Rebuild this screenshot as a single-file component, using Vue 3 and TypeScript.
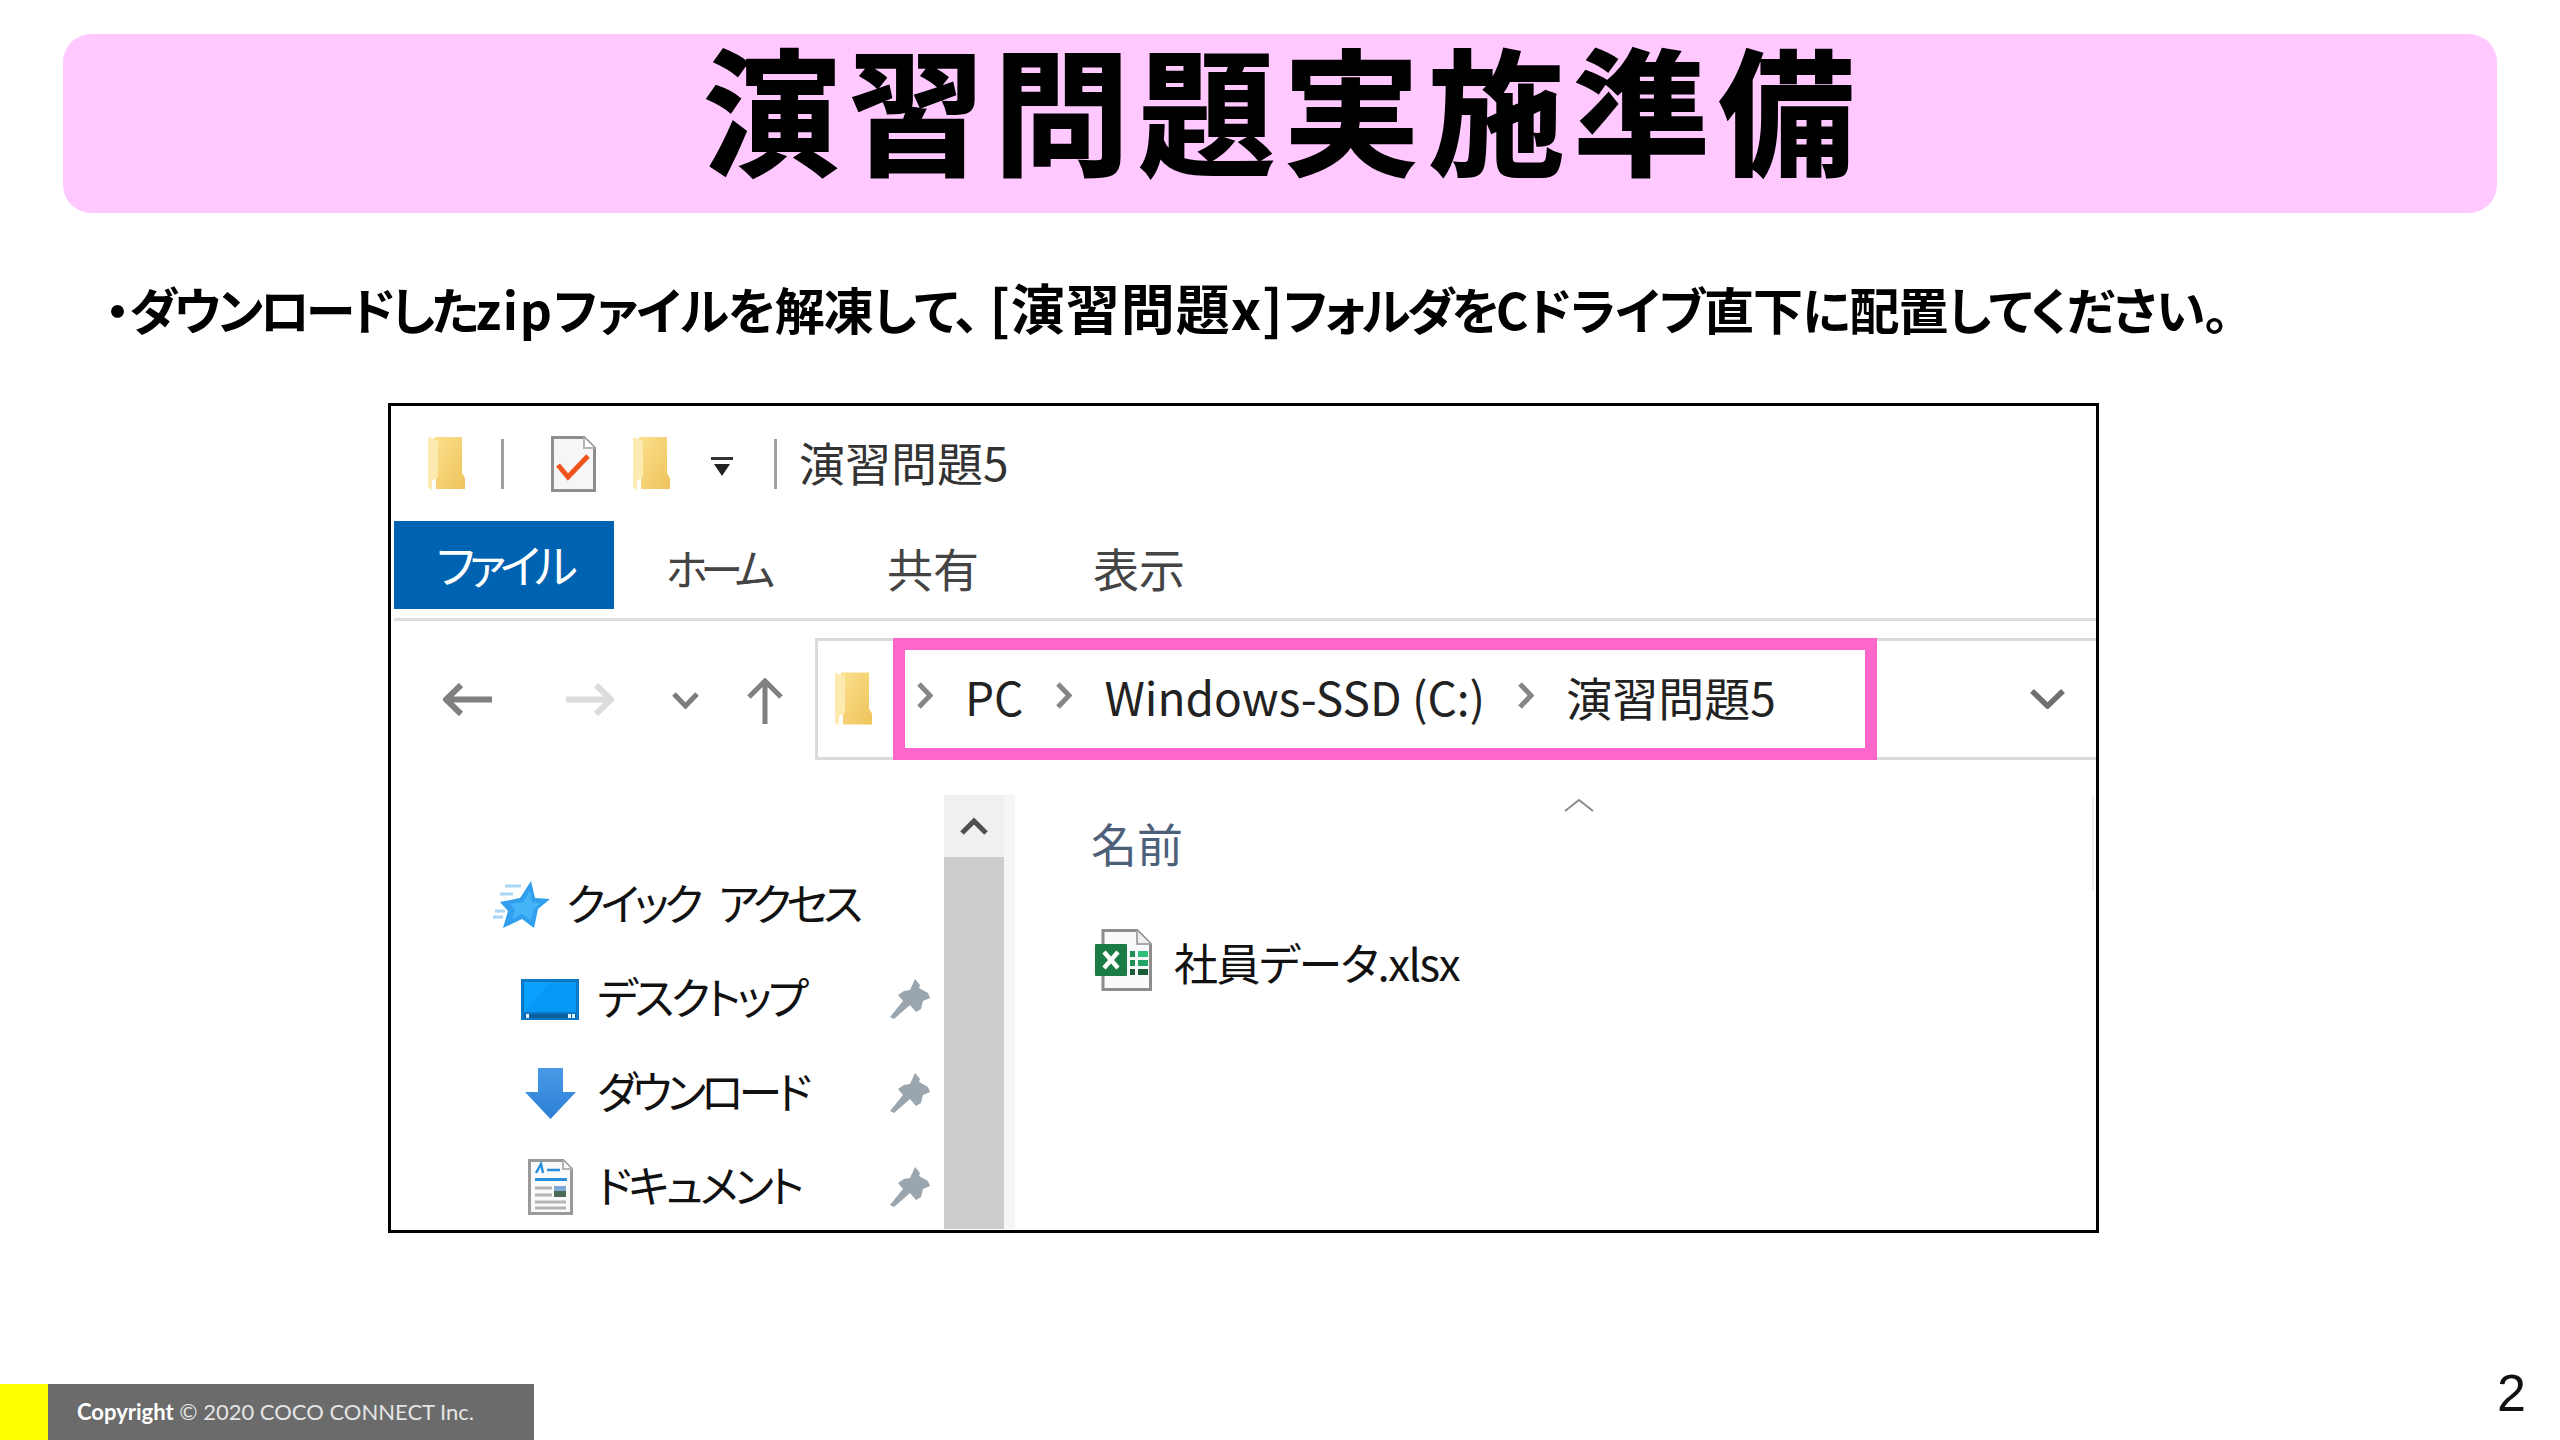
<template>
  <div class="slide">
    <svg class="defs" width="0" height="0" aria-hidden="true">
      <defs>
        <linearGradient id="folderBack" x1="0" y1="0" x2="1" y2="1">
          <stop offset="0" stop-color="#fbe08e" />
          <stop offset="1" stop-color="#eec35a" />
        </linearGradient>
        <linearGradient id="downFill" x1="0" y1="0" x2="0" y2="1">
          <stop offset="0" stop-color="#4a9ae6" />
          <stop offset="1" stop-color="#2a7fd6" />
        </linearGradient>
      </defs>
      <symbol id="folder" viewBox="0 0 37 53">
        <path d="M6 0H34V36L37 41V52H8V41H6Z" fill="url(#folderBack)" />
        <path d="M0 0L10 4V40L4 44V53L0 50Z" fill="#fdeab0" />
      </symbol>
      <symbol id="pin" viewBox="0 0 40 40">
        <path
          d="M25 0L30 6L29 9L38 14L40 19L33 22L31 30L26 33L20 26L4 40L0 38L13 22L8 16L14 12L20 11Z"
          fill="#9aa5ae"
        />
      </symbol>
    </svg>

    <header class="banner">
      <h1>演習問題実施準備</h1>
    </header>

    <p class="lead">
      ・<span class="tight">ダウンロードした</span><span class="zip">zip</span>ファイルを解凍して、<span class="bracket">[演習問題x]</span><span class="tight">フォルダを</span>Cドライブ直下に配置してください。
    </p>

    <section class="window">
      <div class="titlebar">
        <svg class="ic-folder" width="37" height="53"><use href="#folder" /></svg>
        <i class="sep" />
        <svg class="ic-check" width="45" height="56" viewBox="0 0 45 56">
          <path d="M1.5 1.5H33L43.5 12V54.5H1.5Z" fill="#f6f6f6" stroke="#8e8e8e" stroke-width="3" />
          <path d="M33 1.5V12H43.5" fill="#fff" stroke="#b5b5b5" stroke-width="2" />
          <path d="M7 29L17 41L37 20" fill="none" stroke="#f0541c" stroke-width="5" />
        </svg>
        <svg class="ic-folder2" width="39" height="53"><use href="#folder" /></svg>
        <svg class="ic-drop" width="22" height="19" viewBox="0 0 22 19">
          <rect x="0" y="0" width="22" height="3" fill="#333" />
          <path d="M3 7H19L11 19Z" fill="#222" />
        </svg>
        <i class="sep sep2" />
        <span class="win-title">演習問題5</span>
      </div>

      <nav class="tabs">
        <span class="tab active">ファイル</span>
        <span class="tab kana">ホーム</span>
        <span class="tab">共有</span>
        <span class="tab">表示</span>
      </nav>
      <div class="rule" />

      <div class="addr-row">
        <svg class="back" width="49" height="33" viewBox="0 0 49 33">
          <path d="M49 16.5H4M18 2L3 16.5L18 31" fill="none" stroke="#808080" stroke-width="6" />
        </svg>
        <svg class="forward" width="48" height="33" viewBox="0 0 48 33">
          <path d="M0 16.5H44M30 2L45 16.5L30 31" fill="none" stroke="#dcdcdc" stroke-width="6" />
        </svg>
        <svg class="recent" width="27" height="17" viewBox="0 0 27 17">
          <path d="M2 2L13.5 14L25 2" fill="none" stroke="#7c7c7c" stroke-width="5" />
        </svg>
        <svg class="up" width="36" height="46" viewBox="0 0 36 46">
          <path d="M18 46V3M2 19L18 3L34 19" fill="none" stroke="#808080" stroke-width="5" />
        </svg>
        <div class="addr-icon">
          <svg width="37" height="54"><use href="#folder" /></svg>
        </div>
        <div class="crumbs">
          <template v-for="crumb in crumbs" :key="crumb">
            <svg class="crumb-arrow" width="17" height="27" viewBox="0 0 17 27">
              <path d="M3 2L14 13.5L3 25" fill="none" stroke="#868686" stroke-width="5" />
            </svg>
            <span class="crumb">{{ crumb }}</span>
          </template>
        </div>
        <div class="addr-end">
          <svg width="35" height="20" viewBox="0 0 35 20">
            <path d="M2 2L17.5 17L33 2" fill="none" stroke="#707070" stroke-width="5.5" />
          </svg>
        </div>
      </div>

      <div class="panes">
        <aside class="nav">
          <div class="nav-row top">
            <div class="nav-ic">
              <svg width="57" height="48" viewBox="0 0 57 48">
                <path d="M12 5H28M7 13H20M2 30H12M0 36H10" stroke="#a9d6f5" stroke-width="3" />
                <path d="M38 0L42 17L57 18L45 28L41 47L29 38L10 47L15 30L7 21L27 17Z" fill="#2f9fee" />
                <path d="M37 10L39 21L48 22L41 28L38 39L29 33L19 38L22 29L17 23L30 21Z" fill="#45b4f7" />
              </svg>
            </div>
            <span class="quick">クイック アクセス</span>
          </div>
          <div class="nav-row">
            <div class="nav-ic">
              <svg width="58" height="41" viewBox="0 0 58 41">
                <rect width="58" height="41" fill="#0a78c4" />
                <rect x="3" y="3" width="52" height="30" fill="#0aa0ff" />
                <path d="M3 33L30 3H55V33Z" fill="#0797f5" />
                <rect x="3" y="35" width="52" height="4" fill="#0c5f9e" />
                <path d="M5 35h3v4h-3zM47 35h3v4h-3zM51 35h3v4h-3z" fill="#e6f4ff" />
              </svg>
            </div>
            <span>デスクトップ</span>
            <svg class="pin" width="40" height="40"><use href="#pin" /></svg>
          </div>
          <div class="nav-row">
            <div class="nav-ic">
              <svg width="51" height="51" viewBox="0 0 51 51">
                <path d="M13 0H38V24H51L25.5 51L0 24H13Z" fill="url(#downFill)" />
              </svg>
            </div>
            <span class="narrow">ダウンロード</span>
            <svg class="pin" width="40" height="40"><use href="#pin" /></svg>
          </div>
          <div class="nav-row">
            <div class="nav-ic">
              <svg width="45" height="56" viewBox="0 0 45 56">
                <path d="M1.5 1.5H35L43.5 10V54.5H1.5Z" fill="#fafafa" stroke="#9a9a9a" stroke-width="3" />
                <path d="M35 1.5V10H43.5" fill="#fff" stroke="#b5b5b5" stroke-width="2" />
                <path d="M8 14L13 5L15 14M19 11H32" fill="none" stroke="#2a8fdc" stroke-width="2.5" />
                <rect x="7" y="19" width="32" height="3" fill="#2a8fdc" />
                <path d="M7 29H24M7 36H24M7 43H38M7 49H38" stroke="#b4b4b4" stroke-width="3" />
                <rect x="26" y="27" width="12" height="5" fill="#7fa8d8" />
                <rect x="26" y="32" width="12" height="6" fill="#4f6a58" />
              </svg>
            </div>
            <span>ドキュメント</span>
            <svg class="pin" width="40" height="40"><use href="#pin" /></svg>
          </div>
        </aside>

        <div class="scrollbar">
          <div class="scroll-up">
            <svg width="30" height="19" viewBox="0 0 30 19">
              <path d="M3 16L15 4L27 16" fill="none" stroke="#505050" stroke-width="5" />
            </svg>
          </div>
          <div class="scroll-thumb" />
        </div>

        <div class="files">
          <div class="col-head">
            <svg class="sort" width="30" height="14" viewBox="0 0 30 14">
              <path d="M1 13L15 2L29 13" fill="none" stroke="#8a8a8a" stroke-width="2" />
            </svg>
            <span class="col-name">名前</span>
          </div>
          <div class="file">
            <svg width="57" height="62" viewBox="0 0 57 62">
              <path d="M8 1.5H42L55.5 15V60.5H8Z" fill="#fafafa" stroke="#8c8c8c" stroke-width="3" />
              <path d="M42 1.5V15H55.5" fill="#efefef" stroke="#a8a8a8" stroke-width="2" />
              <rect x="0" y="15" width="32" height="32" rx="1" fill="#1a7c45" />
              <path d="M9 23L23 39M23 23L9 39" stroke="#fff" stroke-width="4.5" />
              <rect x="35" y="22" width="5" height="6" fill="#1f8f55" />
              <rect x="43" y="22" width="10" height="6" fill="#30c07a" />
              <rect x="35" y="31" width="5" height="6" fill="#1f8f55" />
              <rect x="43" y="31" width="10" height="6" fill="#21a366" />
              <rect x="35" y="40" width="5" height="6" fill="#185c37" />
              <rect x="43" y="40" width="10" height="6" fill="#185c37" />
            </svg>
            <span>社員データ.xlsx</span>
          </div>
        </div>
      </div>
    </section>

    <footer class="footer">
      <div class="copyright">
        <i class="mark" />
        <p><b>Copyright</b> © 2020 COCO CONNECT Inc.</p>
      </div>
      <span class="page">2</span>
    </footer>
  </div>
</template>

<script setup lang="ts">
const crumbs: string[] = ['PC', 'Windows-SSD (C:)', '演習問題5']
</script>

<style>
html,
body {
  margin: 0;
  background: #fff;
}
</style>

<style scoped>
.slide {
  width: 2560px;
  height: 1440px;
  padding-top: 34px;
  box-sizing: border-box;
  display: flex;
  flex-direction: column;
  overflow: hidden;
  background: #fff;
  color: #000;
  font-family: "Noto Sans CJK JP", "Noto Sans", sans-serif;
}

.defs {
  position: absolute;
}

.banner {
  height: 179px;
  margin: 0 63px;
  background: #ffc9ff;
  border-radius: 28px;
  display: flex;
  justify-content: center;
}

.banner h1 {
  margin: 0;
  padding-left: 7px;
  font-size: 136px;
  line-height: 144px;
  font-weight: 700;
  letter-spacing: 9px;
  -webkit-text-stroke: 2px #000;
}

.lead {
  height: 60px;
  margin: 64px 0 0 105px;
  font-size: 50px;
  line-height: 60px;
  font-weight: 700;
  font-feature-settings: "palt";
  letter-spacing: -1px;
  white-space: nowrap;
}

.lead .tight {
  letter-spacing: -3.8px;
}

.lead .zip {
  letter-spacing: 1.7px;
}

.lead .bracket {
  margin-left: 11px;
  font-size: 54px;
  letter-spacing: 1px;
}

.window {
  width: 1711px;
  height: 830px;
  margin: 66px 0 0 388px;
  border: 3px solid #000;
  box-sizing: border-box;
  overflow: hidden;
  flex-shrink: 0;
  font-size: 46px;
  color: #1c1c1c;
  font-feature-settings: "palt";
}

.titlebar {
  height: 115px;
  padding-left: 37px;
  display: flex;
  align-items: center;
}

.sep {
  width: 3px;
  height: 50px;
  margin-left: 36px;
  background: #a0a0a0;
}

.sep2 {
  margin-left: 41px;
}

.ic-check {
  margin-left: 47px;
}

.ic-folder2 {
  margin-left: 36px;
}

.ic-drop {
  margin-left: 40px;
  margin-top: 6px;
}

.win-title {
  margin: -6px 0 0 22px;
  color: #333;
}

.tabs {
  height: 88px;
  margin-left: 3px;
  display: flex;
}

.tab {
  padding: 0 57px;
  line-height: 92px;
  color: #444;
}

.tab.kana {
  font-size: 43px;
  letter-spacing: -7px;
  padding-left: 52px;
  padding-right: 62px;
}

.tab.active {
  width: 220px;
  padding: 0;
  box-sizing: border-box;
  text-align: center;
  line-height: 84px;
  letter-spacing: -6px;
  background: #0063b1;
  color: #fff;
}

.rule {
  height: 3px;
  margin: 9px 0 0 3px;
  background: #dcdedd;
}

.addr-row {
  height: 122px;
  margin-top: 17px;
  display: flex;
  align-items: center;
}

.back {
  margin-left: 52px;
}

.forward {
  margin-left: 74px;
}

.recent {
  margin-left: 58px;
  margin-top: 2px;
}

.up {
  margin-left: 48px;
  margin-top: 4px;
}

.addr-icon {
  width: 78px;
  height: 100%;
  margin-left: 32px;
  padding-right: 5px;
  box-sizing: border-box;
  border: 3px solid #dadada;
  border-right: 0;
  display: flex;
  align-items: center;
  justify-content: center;
}

.crumbs {
  width: 984px;
  height: 100%;
  padding-left: 11px;
  box-sizing: border-box;
  border: 12px solid #ff66cc;
  display: flex;
  align-items: center;
  gap: 32px;
  white-space: nowrap;
}

.crumb {
  margin-top: -6px;
  color: #222;
  font-size: 46px;
}

.crumb-arrow {
  margin-top: -8px;
}

.addr-end {
  flex: 1;
  height: 100%;
  padding-right: 31px;
  box-sizing: border-box;
  border-top: 3px solid #dadada;
  border-bottom: 3px solid #dadada;
  display: flex;
  align-items: center;
  justify-content: flex-end;
}

.panes {
  height: 434px;
  margin-top: 35px;
  display: flex;
}

.nav {
  width: 553px;
  padding: 63px 14px 0 101px;
  box-sizing: border-box;
  overflow: hidden;
  color: #111;
}

.nav-row {
  height: 94px;
  margin-left: 29px;
  display: flex;
  align-items: center;
  gap: 18px;
  font-size: 44px;
  letter-spacing: -3.5px;
  white-space: nowrap;
}

.nav-row span {
  margin-top: -6px;
}

.nav-row .narrow {
  letter-spacing: -5px;
}

.nav-row .quick {
  letter-spacing: -5px;
  word-spacing: 15px;
}

.nav-row.top {
  margin-left: 0;
  gap: 16px;
}

.nav-ic {
  width: 58px;
  display: flex;
  justify-content: center;
}

.pin {
  margin-left: auto;
}

.scrollbar {
  width: 60px;
  display: flex;
  flex-direction: column;
  border-right: 11px solid #f6f6f6;
}

.scroll-up {
  height: 62px;
  background: #f0f0f0;
  display: flex;
  align-items: center;
  justify-content: center;
}

.scroll-thumb {
  flex: 1;
  background: #cdcdcd;
}

.files {
  flex: 1;
  padding-left: 76px;
}

.col-head {
  height: 95px;
  margin-right: 2px;
  box-sizing: border-box;
  border-right: 2px solid #eeeeee;
  display: flex;
  flex-direction: column;
}

.sort {
  margin: 3px 0 0 473px;
}

.col-name {
  color: #4c607a;
  line-height: 60px;
}

.file {
  height: 62px;
  margin: 39px 0 0 4px;
  display: flex;
  align-items: center;
  gap: 22px;
  font-size: 44px;
  letter-spacing: -1.5px;
  color: #111;
}

.file span {
  margin-top: 4px;
}

.footer {
  margin-top: auto;
  height: 56px;
  display: flex;
  justify-content: space-between;
}

.copyright {
  width: 534px;
  display: flex;
  align-items: stretch;
  background: #6b6b6b;
}

.mark {
  width: 48px;
  background: #ffff00;
}

.copyright p {
  margin: 0 0 0 29px;
  line-height: 56px;
  font-size: 22px;
  color: #e4e4e4;
  font-family: Lato, sans-serif;
  white-space: nowrap;
}

.copyright b {
  color: #fff;
}

.page {
  margin: -21px 34px 0 0;
  font-size: 52px;
  line-height: 60px;
  font-family: "Liberation Sans", sans-serif;
  color: #111;
}
</style>
